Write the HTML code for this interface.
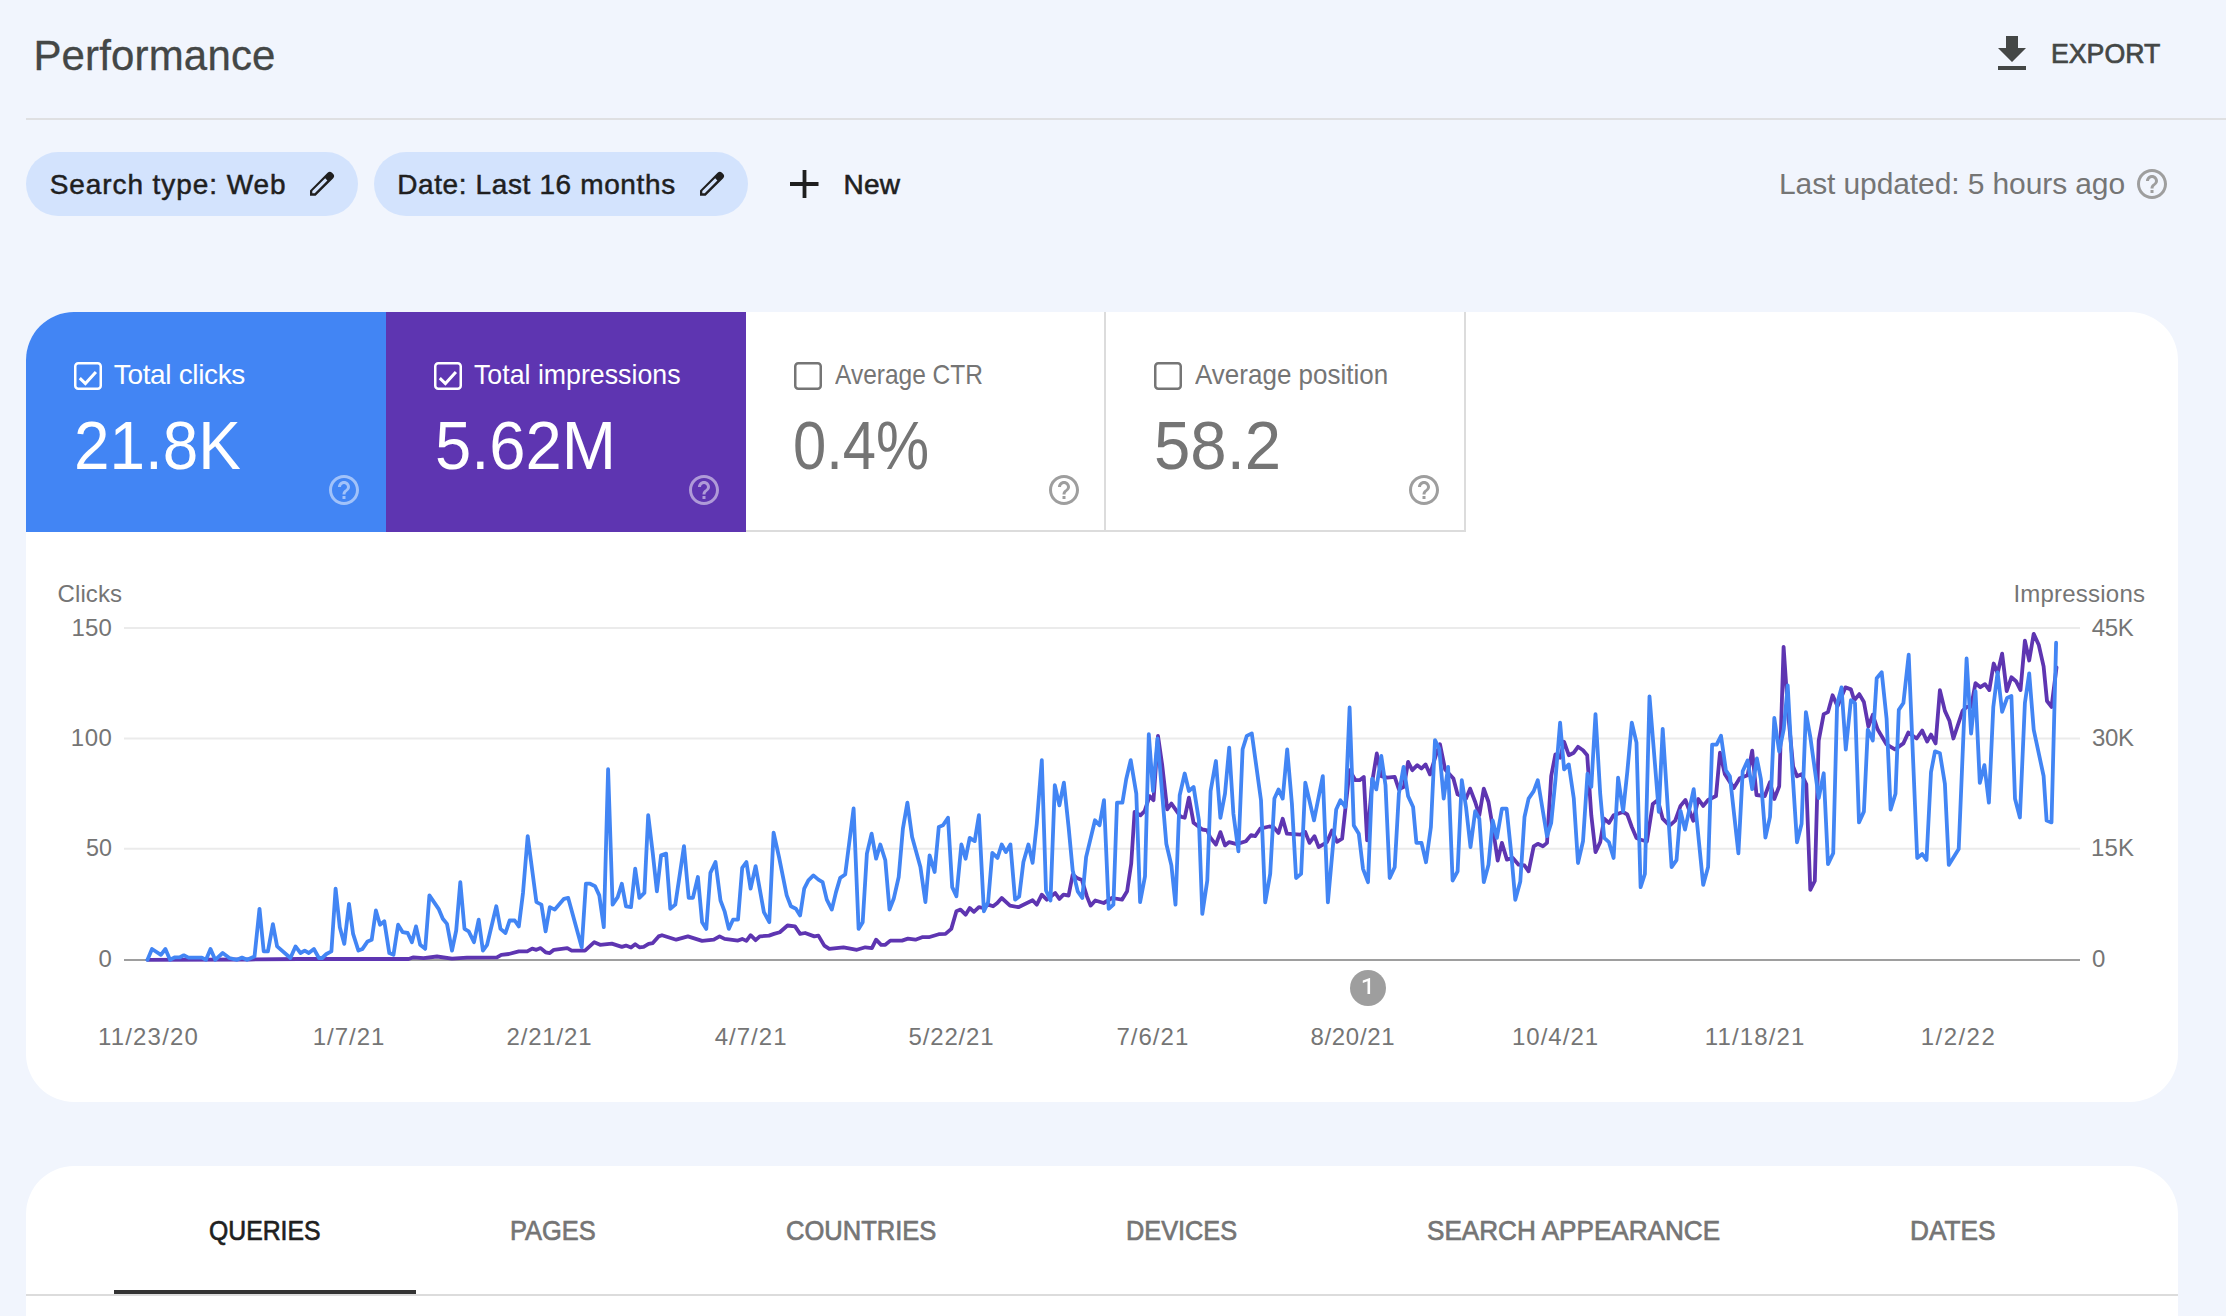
<!DOCTYPE html>
<html><head><meta charset="utf-8"><style>
html,body{margin:0;padding:0;}
body{width:2226px;height:1316px;overflow:hidden;position:relative;background:#f1f5fd;font-family:"Liberation Sans", sans-serif;}
.ab{position:absolute;}
.t{position:absolute;white-space:nowrap;line-height:1;}
</style></head><body>
<div class="ab" style="left:26px;top:312px;width:2152px;height:790px;background:#fff;border-radius:48px;"></div><div class="ab" style="left:26px;top:312px;width:360px;height:220px;background:#4285f4;border-top-left-radius:48px;"></div><div class="ab" style="left:386px;top:312px;width:360px;height:220px;background:#5e35b1;"></div><div class="ab" style="left:746px;top:530px;width:720px;height:2px;background:#dcdcdc;"></div><div class="ab" style="left:1104px;top:312px;width:2px;height:220px;background:#dcdcdc;"></div><div class="ab" style="left:1464px;top:312px;width:2px;height:220px;background:#dcdcdc;"></div><svg class="ab" style="left:74px;top:362px" width="28" height="28" viewBox="0 0 28 28"><rect x="1.25" y="1.25" width="25.5" height="25.5" rx="3" fill="none" stroke="#fff" stroke-width="2.5"/><path d="M5.8 16.1 L11.4 21.5 L21.9 9.9" fill="none" stroke="#fff" stroke-width="3"/></svg><svg class="ab" style="left:326.0px;top:472.0px" width="36" height="36" viewBox="0 0 24 24"><path d="M11 18h2v-2h-2v2zm1-16C6.48 2 2 6.48 2 12s4.48 10 10 10 10-4.48 10-10S17.52 2 12 2zm0 18c-4.41 0-8-3.59-8-8s3.59-8 8-8 8 3.59 8 8-3.59 8-8 8zm0-14c-2.21 0-4 1.790-4 4h2c0-1.1.9-2 2-2s2 .9 2 2c0 2-3 1.75-3 5h2c0-2.25 3-2.5 3-5 0-2.21-1.79-4-4-4z" fill="rgba(255,255,255,0.5)"/></svg><svg class="ab" style="left:434px;top:362px" width="28" height="28" viewBox="0 0 28 28"><rect x="1.25" y="1.25" width="25.5" height="25.5" rx="3" fill="none" stroke="#fff" stroke-width="2.5"/><path d="M5.8 16.1 L11.4 21.5 L21.9 9.9" fill="none" stroke="#fff" stroke-width="3"/></svg><svg class="ab" style="left:686.0px;top:472.0px" width="36" height="36" viewBox="0 0 24 24"><path d="M11 18h2v-2h-2v2zm1-16C6.48 2 2 6.48 2 12s4.48 10 10 10 10-4.48 10-10S17.52 2 12 2zm0 18c-4.41 0-8-3.59-8-8s3.59-8 8-8 8 3.59 8 8-3.59 8-8 8zm0-14c-2.21 0-4 1.790-4 4h2c0-1.1.9-2 2-2s2 .9 2 2c0 2-3 1.75-3 5h2c0-2.25 3-2.5 3-5 0-2.21-1.79-4-4-4z" fill="rgba(255,255,255,0.5)"/></svg><svg class="ab" style="left:794px;top:362px" width="28" height="28" viewBox="0 0 28 28"><rect x="1.25" y="1.25" width="25.5" height="25.5" rx="3" fill="none" stroke="#757575" stroke-width="2.5"/></svg><svg class="ab" style="left:1046.0px;top:472.0px" width="36" height="36" viewBox="0 0 24 24"><path d="M11 18h2v-2h-2v2zm1-16C6.48 2 2 6.48 2 12s4.48 10 10 10 10-4.48 10-10S17.52 2 12 2zm0 18c-4.41 0-8-3.59-8-8s3.59-8 8-8 8 3.59 8 8-3.59 8-8 8zm0-14c-2.21 0-4 1.790-4 4h2c0-1.1.9-2 2-2s2 .9 2 2c0 2-3 1.75-3 5h2c0-2.25 3-2.5 3-5 0-2.21-1.79-4-4-4z" fill="#9e9e9e"/></svg><svg class="ab" style="left:1154px;top:362px" width="28" height="28" viewBox="0 0 28 28"><rect x="1.25" y="1.25" width="25.5" height="25.5" rx="3" fill="none" stroke="#757575" stroke-width="2.5"/></svg><svg class="ab" style="left:1406.0px;top:472.0px" width="36" height="36" viewBox="0 0 24 24"><path d="M11 18h2v-2h-2v2zm1-16C6.48 2 2 6.48 2 12s4.48 10 10 10 10-4.48 10-10S17.52 2 12 2zm0 18c-4.41 0-8-3.59-8-8s3.59-8 8-8 8 3.59 8 8-3.59 8-8 8zm0-14c-2.21 0-4 1.790-4 4h2c0-1.1.9-2 2-2s2 .9 2 2c0 2-3 1.75-3 5h2c0-2.25 3-2.5 3-5 0-2.21-1.79-4-4-4z" fill="#9e9e9e"/></svg><div class="ab" style="left:26px;top:118px;width:2200px;height:2px;background:#dfe0e2;"></div><div class="ab" style="left:26px;top:152px;width:332px;height:64px;border-radius:32px;background:#d3e3fd;"></div><div class="ab" style="left:374px;top:152px;width:374px;height:64px;border-radius:32px;background:#d3e3fd;"></div><svg class="ab" style="left:302px;top:164px" width="40" height="40" viewBox="0 0 40 40"><path fill-rule="evenodd" d="M8 26.4 L25.6 8.8 Q27.8 6.8 30 8.8 L31.2 10 Q33.2 12.2 31 14.4 L13.6 31.8 L8 31.8 Z M10.3 27 L10.3 29.3 L12.7 29.3 L25.4 16.4 L23.2 14.2 Z" fill="#1f1f1f"/></svg><svg class="ab" style="left:692.4px;top:164px" width="40" height="40" viewBox="0 0 40 40"><path fill-rule="evenodd" d="M8 26.4 L25.6 8.8 Q27.8 6.8 30 8.8 L31.2 10 Q33.2 12.2 31 14.4 L13.6 31.8 L8 31.8 Z M10.3 27 L10.3 29.3 L12.7 29.3 L25.4 16.4 L23.2 14.2 Z" fill="#1f1f1f"/></svg><svg class="ab" style="left:788px;top:168px" width="32" height="32" viewBox="0 0 32 32"><path d="M16.5 2 V30 M2 16 H30.5" stroke="#1f1f1f" stroke-width="3.8"/></svg><svg class="ab" style="left:1987.5px;top:30px" width="48" height="48" viewBox="0 0 24 24"><path d="M19 9h-4V3H9v6H5l7 7 7-7zM5 18v2h14v-2H5z" fill="#444746"/></svg><svg class="ab" style="left:2134.0px;top:166.0px" width="36" height="36" viewBox="0 0 24 24"><path d="M11 18h2v-2h-2v2zm1-16C6.48 2 2 6.48 2 12s4.48 10 10 10 10-4.48 10-10S17.52 2 12 2zm0 18c-4.41 0-8-3.59-8-8s3.59-8 8-8 8 3.59 8 8-3.59 8-8 8zm0-14c-2.21 0-4 1.790-4 4h2c0-1.1.9-2 2-2s2 .9 2 2c0 2-3 1.75-3 5h2c0-2.25 3-2.5 3-5 0-2.21-1.79-4-4-4z" fill="#9e9e9e"/></svg><div class="ab" style="left:26px;top:1166px;width:2152px;height:300px;background:#fff;border-radius:48px;"></div><div class="ab" style="left:26px;top:1294px;width:2152px;height:2px;background:#dcdcdc;"></div><div class="ab" style="left:114px;top:1290px;width:302px;height:4px;background:#333;"></div>
<svg class="ab" style="left:0;top:0" width="2226" height="1316" viewBox="0 0 2226 1316">
<g stroke="#ebebeb" stroke-width="2">
<line x1="124" y1="628" x2="2080" y2="628"/><line x1="124" y1="738.5" x2="2080" y2="738.5"/><line x1="124" y1="848.8" x2="2080" y2="848.8"/>
</g>
<line x1="124" y1="960" x2="2080" y2="960" stroke="#9e9e9e" stroke-width="2"/>
<path d="M147.5 959.8 L250.0 959.5 L300.0 959.0 L350.0 959.0 L408.5 959.0 L413.5 957.3 L423.6 958.1 L437.0 956.5 L452.0 958.6 L467.0 957.6 L497.0 957.3 L501.3 954.8 L508.8 954.0 L518.8 951.4 L527.2 951.4 L532.2 948.6 L536.4 949.8 L540.6 948.1 L545.6 952.3 L549.8 953.1 L553.9 949.8 L567.3 948.1 L571.7 950.6 L585.0 950.6 L594.3 942.2 L600.1 944.8 L611.8 943.6 L621.8 946.9 L626.0 945.6 L631.0 947.6 L635.2 944.2 L639.4 947.3 L643.6 946.9 L648.6 943.9 L652.8 943.1 L658.6 936.4 L662.0 935.2 L676.2 939.7 L687.9 936.4 L702.1 940.9 L713.8 939.7 L719.6 936.4 L724.6 938.9 L738.0 940.6 L742.2 938.9 L746.4 940.9 L750.6 935.2 L755.6 940.2 L759.8 936.4 L769.0 935.6 L774.0 933.9 L779.8 932.2 L787.5 925.5 L795.0 926.4 L800.1 933.9 L805.1 933.0 L814.3 936.4 L818.4 935.6 L824.3 945.6 L829.3 948.9 L843.5 947.3 L856.9 949.8 L865.3 947.3 L871.9 948.1 L876.1 939.7 L881.1 944.8 L885.3 944.8 L890.3 940.6 L902.0 940.6 L907.9 938.6 L915.4 939.7 L922.1 937.2 L928.8 937.2 L938.8 934.2 L945.5 933.9 L951.3 928.9 L956.4 911.3 L960.5 909.6 L965.6 914.7 L969.7 908.0 L973.9 911.8 L978.9 907.1 L983.1 908.0 L988.1 904.6 L993.1 906.3 L997.3 903.0 L1001.7 898.0 L1010.0 905.6 L1018.4 907.2 L1032.6 900.2 L1036.8 904.7 L1041.8 894.7 L1046.8 899.7 L1055.2 893.0 L1059.4 898.9 L1063.5 894.7 L1068.6 895.5 L1072.7 874.6 L1076.9 878.0 L1081.9 880.1 L1086.9 896.4 L1090.6 905.6 L1095.3 900.5 L1103.7 903.0 L1112.0 898.0 L1122.0 899.7 L1127.1 891.3 L1131.2 863.8 L1134.6 811.9 L1140.4 815.3 L1144.6 811.1 L1149.6 796.1 L1153.5 800.2 L1158.0 735.9 L1162.2 765.1 L1167.2 809.4 L1171.4 803.6 L1180.6 816.6 L1184.7 817.8 L1188.9 797.7 L1193.6 822.8 L1202.3 829.5 L1207.3 830.3 L1210.0 837.1 L1215.9 844.6 L1220.4 832.1 L1225.0 845.4 L1229.2 842.1 L1236.7 844.1 L1245.9 841.3 L1251.0 835.1 L1255.1 836.2 L1260.2 828.7 L1269.3 826.5 L1273.5 827.0 L1278.5 832.9 L1282.7 818.7 L1286.9 833.7 L1300.3 834.6 L1305.3 832.1 L1309.5 842.9 L1314.5 836.2 L1318.7 847.1 L1327.0 842.1 L1332.0 830.4 L1337.0 841.8 L1342.1 838.7 L1349.6 770.2 L1355.4 780.2 L1359.6 780.2 L1363.8 776.9 L1367.1 840.4 L1372.2 781.9 L1376.8 753.5 L1381.3 776.1 L1387.2 777.7 L1394.7 776.9 L1398.9 789.4 L1403.9 786.9 L1408.1 761.9 L1412.3 770.2 L1417.3 765.2 L1421.5 768.5 L1425.6 764.4 L1430.0 774.4 L1435.9 755.2 L1440.0 744.3 L1445.1 769.4 L1453.4 778.6 L1457.6 794.4 L1466.0 798.6 L1470.1 788.6 L1475.2 802.0 L1479.3 815.3 L1483.8 788.6 L1488.5 802.0 L1492.7 827.0 L1497.7 860.5 L1501.9 842.9 L1506.9 859.6 L1512.8 858.0 L1518.6 864.7 L1524.5 865.5 L1528.6 871.3 L1533.7 846.3 L1537.8 843.8 L1542.9 846.3 L1547.0 842.9 L1551.2 776.1 L1555.4 754.3 L1560.1 757.7 L1564.1 741.8 L1568.8 755.2 L1573.8 752.7 L1578.0 746.8 L1583.0 750.2 L1587.2 755.2 L1591.3 815.3 L1595.5 852.1 L1600.2 842.1 L1604.2 818.7 L1608.9 822.9 L1613.6 815.3 L1623.1 812.0 L1627.3 814.5 L1631.8 827.0 L1636.5 837.9 L1640.0 839.5 L1646.9 841.5 L1652.8 803.9 L1657.8 800.0 L1662.7 818.7 L1669.6 825.7 L1675.2 820.7 L1680.5 805.9 L1685.4 800.0 L1693.3 820.7 L1698.3 799.0 L1703.2 805.9 L1708.1 800.0 L1716.0 796.0 L1720.0 752.6 L1724.9 774.3 L1733.8 788.1 L1739.7 778.3 L1747.6 775.3 L1752.2 750.6 L1756.5 795.0 L1764.8 796.0 L1770.0 782.2 L1774.3 799.0 L1779.2 786.2 L1783.6 646.9 L1788.1 713.1 L1793.1 766.4 L1797.0 776.3 L1801.6 774.3 L1806.3 784.2 L1810.3 889.8 L1814.8 881.0 L1818.7 740.7 L1823.7 714.1 L1828.0 712.1 L1832.6 695.3 L1837.5 706.2 L1845.4 687.4 L1850.9 689.4 L1854.3 700.2 L1859.3 694.1 L1863.9 702.0 L1868.4 726.7 L1872.8 714.8 L1877.7 729.6 L1886.6 744.4 L1894.9 749.4 L1903.4 743.4 L1908.3 732.6 L1916.6 738.5 L1922.2 730.6 L1927.1 741.5 L1931.0 734.6 L1935.6 743.4 L1939.9 690.1 L1944.9 710.9 L1949.4 720.7 L1953.4 738.5 L1962.6 710.9 L1966.6 706.9 L1971.1 706.9 L1975.5 683.2 L1980.4 687.2 L1985.0 684.2 L1989.3 690.1 L1993.7 663.5 L1997.6 673.3 L2002.1 653.6 L2006.7 691.1 L2011.4 677.3 L2016.0 681.2 L2020.5 690.1 L2024.9 640.7 L2029.2 660.5 L2033.7 633.8 L2038.7 644.7 L2043.6 666.4 L2047.0 701.0 L2051.5 706.9 L2056.5 667.4" fill="none" stroke="#5e35b1" stroke-width="3.8" stroke-linejoin="round" stroke-linecap="round"/>
<path d="M147.5 959.8 L152.0 949.0 L160.9 954.8 L165.4 949.0 L170.0 959.8 L175.0 957.3 L180.0 957.3 L183.8 955.3 L188.5 957.6 L201.9 957.6 L206.0 959.8 L210.5 949.0 L215.2 959.8 L222.7 953.0 L229.4 958.0 L237.0 959.8 L242.0 957.6 L247.0 959.8 L254.5 956.5 L259.5 908.8 L263.7 951.4 L267.9 951.4 L272.9 924.2 L277.1 946.4 L290.4 958.0 L295.5 946.4 L300.5 953.0 L304.7 950.6 L308.8 953.0 L313.9 949.0 L318.9 958.0 L322.2 958.0 L326.4 954.0 L331.4 951.4 L335.6 888.7 L339.8 927.2 L344.3 943.9 L349.0 903.8 L353.1 933.9 L358.4 950.6 L362.5 948.9 L367.6 941.4 L371.7 939.7 L375.9 910.5 L380.0 924.7 L384.3 921.3 L389.3 953.1 L393.5 954.8 L398.1 924.7 L402.7 932.2 L407.7 933.0 L411.9 942.2 L416.0 926.4 L420.2 944.8 L425.2 948.9 L429.4 895.4 L438.6 908.8 L442.8 918.8 L447.0 923.9 L452.0 950.6 L456.2 930.5 L460.3 882.1 L464.5 928.9 L468.7 931.4 L474.0 942.2 L478.7 919.7 L482.9 950.6 L487.1 944.8 L496.3 906.3 L500.5 928.9 L505.5 933.0 L509.6 920.5 L514.7 920.5 L518.8 926.4 L523.0 892.9 L527.7 836.1 L536.4 902.1 L541.4 904.6 L545.6 931.4 L549.8 907.1 L554.8 909.6 L564.0 898.8 L568.2 897.9 L581.7 947.3 L585.9 883.7 L590.1 883.7 L595.1 886.2 L599.3 895.4 L603.8 927.2 L608.1 769.2 L612.6 904.6 L617.7 897.1 L621.8 883.7 L626.0 906.3 L631.0 907.1 L635.2 868.7 L639.4 897.9 L644.4 892.9 L648.2 815.2 L652.8 853.6 L656.9 891.3 L661.1 855.3 L666.1 853.6 L670.3 908.8 L675.3 904.6 L684.0 846.1 L688.7 897.9 L692.9 897.9 L697.9 877.0 L702.1 922.2 L706.3 928.9 L710.4 872.9 L715.5 862.0 L720.5 900.5 L724.6 911.3 L728.8 928.9 L733.0 919.7 L738.0 919.7 L742.2 867.9 L746.4 862.0 L750.6 888.7 L755.6 866.2 L763.9 912.2 L769.3 922.2 L773.6 832.7 L779.0 857.0 L786.7 895.4 L790.9 906.3 L795.9 908.8 L800.1 915.5 L804.2 888.7 L808.4 880.4 L813.4 875.4 L818.4 879.6 L822.6 882.1 L826.8 899.6 L831.8 909.6 L836.0 892.1 L840.2 877.9 L845.2 874.5 L853.6 808.5 L858.6 928.9 L862.7 922.2 L866.9 853.6 L871.6 833.6 L876.1 858.7 L880.3 844.5 L885.3 860.3 L889.5 909.6 L893.7 898.8 L898.7 877.0 L902.9 828.6 L907.4 802.7 L912.1 836.9 L920.4 867.0 L925.4 902.1 L929.6 855.3 L934.6 872.0 L938.8 826.9 L943.0 825.2 L948.0 817.7 L952.2 887.1 L956.4 896.3 L961.4 844.5 L965.6 858.7 L969.7 837.8 L974.7 841.1 L978.9 815.2 L983.9 911.3 L988.1 902.1 L992.3 852.8 L997.5 857.9 L1001.7 844.5 L1005.9 852.1 L1010.4 844.5 L1015.1 899.7 L1019.2 896.4 L1023.4 862.1 L1028.4 844.5 L1032.6 862.9 L1036.8 823.6 L1041.8 760.1 L1046.0 890.5 L1050.5 900.5 L1054.8 785.2 L1059.4 805.3 L1063.9 782.7 L1068.6 827.0 L1072.7 870.5 L1077.7 891.3 L1082.3 898.0 L1086.1 857.1 L1095.0 820.3 L1099.5 825.3 L1104.0 800.2 L1108.7 908.9 L1113.4 904.7 L1117.0 802.7 L1122.4 802.7 L1126.2 779.3 L1130.7 760.1 L1136.3 793.6 L1140.1 902.2 L1145.0 876.3 L1148.8 734.2 L1153.0 791.0 L1157.5 738.4 L1162.2 794.4 L1166.3 843.7 L1171.4 865.4 L1175.5 904.7 L1179.7 795.2 L1184.7 773.5 L1188.9 791.0 L1193.6 786.9 L1198.9 820.3 L1202.3 913.9 L1207.3 880.5 L1210.6 791.0 L1215.9 761.0 L1220.4 817.9 L1225.0 793.6 L1229.2 747.6 L1233.4 813.7 L1238.4 851.3 L1242.6 749.3 L1246.8 735.9 L1251.8 733.4 L1261.0 800.3 L1265.2 902.3 L1270.2 873.9 L1274.4 798.6 L1278.5 789.4 L1282.7 798.6 L1287.2 749.3 L1291.9 803.6 L1296.1 878.0 L1301.1 873.9 L1305.3 782.7 L1314.0 820.4 L1322.8 776.1 L1327.9 902.3 L1336.2 809.5 L1340.4 800.3 L1345.4 807.0 L1349.6 707.5 L1353.8 825.4 L1358.8 833.7 L1363.0 868.8 L1368.0 882.2 L1372.2 778.6 L1376.3 789.4 L1381.3 756.0 L1385.5 785.3 L1389.7 878.0 L1394.7 867.2 L1398.9 793.6 L1403.6 766.9 L1408.1 796.1 L1413.1 807.0 L1416.4 842.9 L1421.5 842.9 L1426.0 862.2 L1430.9 827.0 L1435.0 740.1 L1439.2 748.5 L1443.7 798.6 L1448.1 766.9 L1452.6 880.5 L1457.6 871.3 L1461.8 780.2 L1466.0 807.0 L1470.5 847.1 L1475.2 811.2 L1479.3 818.7 L1483.8 882.2 L1488.5 864.7 L1492.7 820.4 L1496.9 837.9 L1501.9 808.7 L1506.6 808.7 L1511.1 852.1 L1515.3 899.8 L1520.3 881.4 L1524.5 817.0 L1528.6 798.6 L1533.7 791.1 L1537.8 780.2 L1547.0 836.2 L1551.2 822.9 L1555.4 780.2 L1560.1 722.6 L1564.1 769.4 L1568.8 764.4 L1573.8 798.6 L1578.0 863.0 L1583.0 841.3 L1587.5 773.6 L1591.3 786.9 L1595.5 714.2 L1600.2 793.6 L1604.2 837.9 L1608.9 842.1 L1613.6 858.0 L1618.1 777.7 L1623.1 811.2 L1627.3 771.9 L1631.8 722.6 L1636.5 742.6 L1640.6 887.2 L1644.9 874.0 L1649.5 696.3 L1658.8 811.8 L1662.7 728.9 L1671.6 867.1 L1676.5 860.2 L1680.5 810.8 L1685.0 829.6 L1693.7 789.1 L1703.2 884.9 L1708.1 867.1 L1712.1 744.7 L1716.6 744.7 L1721.0 735.8 L1725.9 770.4 L1729.9 776.3 L1738.4 853.3 L1742.7 771.3 L1747.6 760.5 L1752.2 789.1 L1756.9 758.5 L1760.9 779.2 L1765.4 837.5 L1770.0 816.8 L1774.3 718.0 L1779.2 751.6 L1783.8 728.9 L1787.7 685.4 L1792.1 766.4 L1797.0 842.4 L1801.6 823.7 L1805.9 712.1 L1810.3 736.8 L1818.7 798.0 L1823.7 773.3 L1828.0 864.2 L1833.2 853.3 L1837.1 704.2 L1841.5 687.4 L1845.8 749.6 L1850.9 700.2 L1855.0 703.0 L1859.0 822.4 L1863.9 811.6 L1867.8 729.6 L1872.8 740.5 L1876.7 678.3 L1881.7 672.3 L1886.6 718.8 L1890.6 809.6 L1895.5 793.8 L1898.8 709.9 L1903.4 703.0 L1908.7 654.6 L1917.2 858.0 L1922.2 854.0 L1926.5 860.0 L1931.0 772.1 L1935.0 751.3 L1939.9 753.3 L1944.9 783.9 L1948.8 864.9 L1958.7 849.1 L1966.6 658.5 L1971.1 733.6 L1975.5 691.1 L1979.8 782.9 L1984.4 765.2 L1988.9 802.7 L1993.3 706.9 L1997.6 672.3 L2002.1 711.8 L2007.1 698.0 L2011.4 696.0 L2015.0 798.7 L2019.9 817.5 L2024.9 703.0 L2029.2 673.3 L2033.7 729.6 L2043.6 776.0 L2046.6 820.5 L2051.5 822.4 L2056.1 642.7" fill="none" stroke="#4285f4" stroke-width="3.8" stroke-linejoin="round" stroke-linecap="round"/>
<circle cx="1368" cy="988" r="18" fill="#9e9e9e"/><path d="M1367.5 994 H1370.1 V978 H1369.7 L1362.8 980.6 V982.9 L1367.5 981.3 Z" fill="#fff"/>
</svg>
<div class="t" style="left:33.4px;top:34.75px;font-size:42px;color:#444746;font-weight:normal;letter-spacing:0.16px;-webkit-text-stroke:0.3px #444746;">Performance</div><div class="t" style="left:2051.29px;top:40.30px;font-size:28px;color:#444746;font-weight:normal;letter-spacing:0px;-webkit-text-stroke:0.7px #444746;transform:scaleX(0.9536);transform-origin:0 0;">EXPORT</div><div class="t" style="left:49.7px;top:170.80px;font-size:28px;color:#1f1f1f;font-weight:normal;letter-spacing:0.92px;-webkit-text-stroke:0.5px #1f1f1f;">Search type: Web</div><div class="t" style="left:397.2px;top:170.80px;font-size:28px;color:#1f1f1f;font-weight:normal;letter-spacing:0.621px;-webkit-text-stroke:0.5px #1f1f1f;">Date: Last 16 months</div><div class="t" style="left:843.6px;top:170.60px;font-size:28px;color:#1f1f1f;font-weight:normal;letter-spacing:0.2px;-webkit-text-stroke:0.6px #1f1f1f;">New</div><div class="t" style="left:1779.0px;top:168.60px;font-size:30px;color:#757575;font-weight:normal;letter-spacing:-0.104px;">Last updated: 5 hours ago</div><div class="t" style="left:113.8px;top:360.50px;font-size:28px;color:#fff;font-weight:normal;letter-spacing:-0.345px;">Total clicks</div><div class="t" style="left:73.69px;top:411.14px;font-size:68px;color:#fff;font-weight:normal;letter-spacing:0px;transform:scaleX(0.9382);transform-origin:0 0;">21.8K</div><div class="t" style="left:473.75px;top:360.70px;font-size:28px;color:#fff;font-weight:normal;letter-spacing:0px;transform:scaleX(0.9547);transform-origin:0 0;">Total impressions</div><div class="t" style="left:435.12px;top:410.84px;font-size:68px;color:#fff;font-weight:normal;letter-spacing:0px;transform:scaleX(0.9583);transform-origin:0 0;">5.62M</div><div class="t" style="left:834.5px;top:360.60px;font-size:28px;color:#757575;font-weight:normal;letter-spacing:0px;transform:scaleX(0.875);transform-origin:0 0;">Average CTR</div><div class="t" style="left:793.06px;top:410.94px;font-size:68px;color:#757575;font-weight:normal;letter-spacing:0px;transform:scaleX(0.8793);transform-origin:0 0;">0.4%</div><div class="t" style="left:1194.6px;top:360.60px;font-size:28px;color:#757575;font-weight:normal;letter-spacing:0px;transform:scaleX(0.9282);transform-origin:0 0;">Average position</div><div class="t" style="left:1154.02px;top:410.94px;font-size:68px;color:#757575;font-weight:normal;letter-spacing:0px;transform:scaleX(0.9611);transform-origin:0 0;">58.2</div><div class="t" style="left:57.6px;top:582.08px;font-size:24px;color:#757575;font-weight:normal;letter-spacing:0.08px;">Clicks</div><div class="t" style="left:2013.4px;top:582.08px;font-size:24px;color:#757575;font-weight:normal;letter-spacing:0.22px;">Impressions</div><div class="t" style="left:209.12px;top:1216.60px;font-size:28px;color:#1f1f1f;font-weight:normal;letter-spacing:0px;-webkit-text-stroke:0.7px #1f1f1f;transform:scaleX(0.8847);transform-origin:0 0;">QUERIES</div><div class="t" style="left:510.08px;top:1216.60px;font-size:28px;color:#757575;font-weight:normal;letter-spacing:0px;-webkit-text-stroke:0.7px #757575;transform:scaleX(0.9076);transform-origin:0 0;">PAGES</div><div class="t" style="left:786.09px;top:1216.60px;font-size:28px;color:#757575;font-weight:normal;letter-spacing:0px;-webkit-text-stroke:0.7px #757575;transform:scaleX(0.9117);transform-origin:0 0;">COUNTRIES</div><div class="t" style="left:1125.89px;top:1216.60px;font-size:28px;color:#757575;font-weight:normal;letter-spacing:0px;-webkit-text-stroke:0.7px #757575;transform:scaleX(0.9042);transform-origin:0 0;">DEVICES</div><div class="t" style="left:1426.97px;top:1216.60px;font-size:28px;color:#757575;font-weight:normal;letter-spacing:0px;-webkit-text-stroke:0.7px #757575;transform:scaleX(0.9326);transform-origin:0 0;">SEARCH APPEARANCE</div><div class="t" style="left:1909.83px;top:1216.60px;font-size:28px;color:#757575;font-weight:normal;letter-spacing:0px;-webkit-text-stroke:0.7px #757575;transform:scaleX(0.9375);transform-origin:0 0;">DATES</div><div class="t" style="left:97.9px;top:1025.18px;font-size:24px;color:#757575;font-weight:normal;letter-spacing:1.2px;">11/23/20</div><div class="t" style="left:312.8px;top:1025.18px;font-size:24px;color:#757575;font-weight:normal;letter-spacing:0.98px;">1/7/21</div><div class="t" style="left:506.5px;top:1025.18px;font-size:24px;color:#757575;font-weight:normal;letter-spacing:0.817px;">2/21/21</div><div class="t" style="left:714.7px;top:1025.18px;font-size:24px;color:#757575;font-weight:normal;letter-spacing:1.02px;">4/7/21</div><div class="t" style="left:908.6px;top:1025.18px;font-size:24px;color:#757575;font-weight:normal;letter-spacing:0.817px;">5/22/21</div><div class="t" style="left:1116.5px;top:1025.18px;font-size:24px;color:#757575;font-weight:normal;letter-spacing:1.0px;">7/6/21</div><div class="t" style="left:1310.5px;top:1025.18px;font-size:24px;color:#757575;font-weight:normal;letter-spacing:0.667px;">8/20/21</div><div class="t" style="left:1512.0px;top:1025.18px;font-size:24px;color:#757575;font-weight:normal;letter-spacing:1.0px;">10/4/21</div><div class="t" style="left:1704.7px;top:1025.18px;font-size:24px;color:#757575;font-weight:normal;letter-spacing:1.143px;">11/18/21</div><div class="t" style="left:1920.8px;top:1025.18px;font-size:24px;color:#757575;font-weight:normal;letter-spacing:1.44px;">1/2/22</div><div class="t" style="left:71.5px;top:615.68px;font-size:24px;color:#757575;font-weight:normal;letter-spacing:0.15px;">150</div><div class="t" style="left:70.8px;top:725.58px;font-size:24px;color:#757575;font-weight:normal;letter-spacing:0.55px;">100</div><div class="t" style="left:85.63px;top:835.98px;font-size:24px;color:#757575;font-weight:normal;letter-spacing:0px;transform:scaleX(0.972);transform-origin:0 0;">50</div><div class="t" style="left:98.5px;top:946.98px;font-size:24px;color:#757575;font-weight:normal;letter-spacing:0px;">0</div><div class="t" style="left:2091.8px;top:615.68px;font-size:24px;color:#757575;font-weight:normal;letter-spacing:-0.4px;">45K</div><div class="t" style="left:2091.9px;top:725.58px;font-size:24px;color:#757575;font-weight:normal;letter-spacing:-0.25px;">30K</div><div class="t" style="left:2090.9px;top:835.98px;font-size:24px;color:#757575;font-weight:normal;letter-spacing:0.25px;">15K</div><div class="t" style="left:2091.9px;top:946.98px;font-size:24px;color:#757575;font-weight:normal;letter-spacing:0px;">0</div>
</body></html>
